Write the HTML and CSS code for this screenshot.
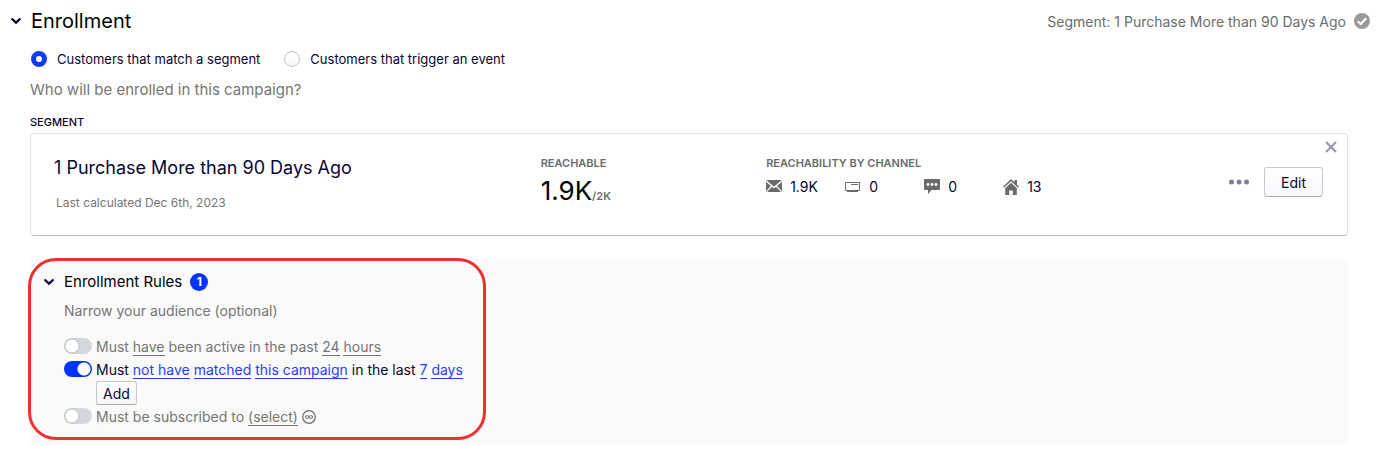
FILE: index.html
```html
<!DOCTYPE html>
<html lang="en">
<head>
    <meta charset="UTF-8">
    <meta name="viewport" content="width=device-width, initial-scale=1.0">
    <title>Campaign Enrollment</title>
    <link rel="stylesheet" href="styles.css">
</head>
<body>
    <header class="section-header">
        <button class="chevron" aria-label="Collapse enrollment">
            <svg width="12" height="8" viewBox="0 0 12 8"><path d="M1.5 1.5 6 5.7 10.5 1.5" fill="none" stroke="currentColor" stroke-width="2.3"/></svg>
        </button>
        <h1>Enrollment</h1>
        <span class="summary">Segment: 1 Purchase More than 90 Days Ago</span>
        <svg class="check" width="16" height="16" viewBox="0 0 16 16">
            <circle cx="8" cy="8" r="8" fill="#999"/>
            <path d="M3.8 8.2 6.8 11 12.2 5.2" fill="none" stroke="#fff" stroke-width="2.2"/>
        </svg>
    </header>

    <main class="content">
        <div class="enroll-type">
            <label><input type="radio" name="enroll" checked>Customers that match a segment</label>
            <label><input type="radio" name="enroll">Customers that trigger an event</label>
        </div>
        <p class="question">Who will be enrolled in this campaign?</p>

        <h2 class="segment-label">SEGMENT</h2>
        <section class="card">
            <div class="segment-name">
                <h3>1 Purchase More than 90 Days Ago</h3>
                <p>Last calculated Dec 6th, 2023</p>
            </div>
            <div class="stat">
                <h4>REACHABLE</h4>
                <p class="total">1.9K<span>/2K</span></p>
            </div>
            <div class="stat">
                <h4>REACHABILITY BY CHANNEL</h4>
                <ul class="channels">
                    <li>
                        <!-- email -->
                        <svg width="16" height="16" viewBox="0 0 16 16">
                            <rect y="1" width="16" height="12" rx="1" fill="#6b6b6b"/>
                            <path d="M0 1.8 8 8.6 16 1.8M.5 12.6 5.8 7M15.5 12.6 10.2 7" fill="none" stroke="#fff" stroke-width="1.3"/>
                        </svg>
                        1.9K
                    </li>
                    <li>
                        <!-- banner -->
                        <svg width="16" height="16" viewBox="0 0 16 16">
                            <path d="M.5 3.5h14v8H.5zM6 5.5h7M2 12.5h11" fill="none" stroke="#6b6b6b"/>
                        </svg>
                        0
                    </li>
                    <li>
                        <!-- sms -->
                        <svg width="16" height="16" viewBox="0 0 16 16">
                            <path d="M1 0h14a1 1 0 0 1 1 1v9a1 1 0 0 1-1 1H7.5L4 15V11H1a1 1 0 0 1-1-1V1a1 1 0 0 1 1-1z" fill="#6b6b6b"/>
                            <g fill="#fff"><circle cx="4" cy="5.5" r="1.4"/><circle cx="8" cy="5.5" r="1.4"/><circle cx="12" cy="5.5" r="1.4"/></g>
                        </svg>
                        0
                    </li>
                    <li>
                        <!-- on site -->
                        <svg width="16" height="16" viewBox="0 0 16 16">
                            <path d="M8 0 11.5 3.3V1H14v4.7L16 7.7 15 8.8 8 2.3 1 8.8 0 7.7z" fill="#6b6b6b"/>
                            <path d="M8 3.8 13.8 9.2V16H9.8V11.5H6.2V16H2.2V9.2z" fill="#6b6b6b"/>
                        </svg>
                        13
                    </li>
                </ul>
            </div>
            <div class="actions">
                <button class="more" aria-label="More options">
                    <svg width="20" height="6" viewBox="0 0 20 6"><g fill="#7f7d97"><circle cx="2.5" cy="3" r="2.5"/><circle cx="10" cy="3" r="2.5"/><circle cx="17.5" cy="3" r="2.5"/></g></svg>
                </button>
                <button class="btn">Edit</button>
            </div>
            <button class="close" aria-label="Remove segment">
                <svg width="12" height="12" viewBox="0 0 12 12"><path d="M1 1 11 11M11 1 1 11" stroke="#9896ac" stroke-width="2"/></svg>
            </button>
        </section>

        <section class="rules-panel">
            <div class="rules">
                <div class="rules-header">
                    <button class="chevron" aria-label="Collapse enrollment rules">
                        <svg width="12" height="8" viewBox="0 0 12 8"><path d="M1.5 1.5 6 5.7 10.5 1.5" fill="none" stroke="currentColor" stroke-width="2.3"/></svg>
                    </button>
                    <h2>Enrollment Rules</h2>
                    <span class="count">1</span>
                </div>
                <p class="hint">Narrow your audience (optional)</p>

                <div class="rule">
                    <input type="checkbox" class="toggle" id="rule-active">
                    <label for="rule-active">Must <a href="#">have</a> been active in the past <a href="#">24</a> <a href="#">hours</a></label>
                </div>
                <div class="rule">
                    <input type="checkbox" class="toggle" id="rule-matched" checked>
                    <label for="rule-matched">Must <a href="#">not have</a> <a href="#">matched</a> <a href="#">this campaign</a> in the last <a href="#">7</a> <a href="#">days</a></label>
                </div>
                <button class="btn add">Add</button>
                <div class="rule">
                    <input type="checkbox" class="toggle" id="rule-subscribed">
                    <label for="rule-subscribed">Must be subscribed to <a href="#">(select)</a></label>
                    <svg width="14" height="14" viewBox="0 0 14 14" fill="none" stroke="#6b6b6b">
                        <circle cx="7" cy="7" r="6.3" stroke-width="1.2"/>
                        <rect x="3.5" y="5.7" width="3.5" height="2.6" rx="1.3"/>
                        <rect x="7" y="5.7" width="3.5" height="2.6" rx="1.3"/>
                    </svg>
                </div>
            </div>
        </section>
    </main>
</body>
</html>
```
FILE: styles.css
```css
* {
    box-sizing: border-box;
}

body {
    font-family: Inter, "Liberation Sans", sans-serif;
    font-size: 14px;
    margin: 0;
    background: #fff;
    color: #0b0533;
}

h1, h2, h3, h4, p, ul {
    margin: 0;
    padding: 0;
    font-weight: 400;
}

button {
    font-family: inherit;
    color: inherit;
    cursor: pointer;
}

svg {
    display: block;
    flex: none;
}

/* Section header */
.section-header {
    display: flex;
    align-items: center;
    height: 42px;
    padding: 0 12px 0 10px;
}

.section-header h1 {
    font-size: 20px;
    color: #000;
    margin: 0 auto 0 9px;
}

.summary {
    color: #6b6b6b;
    margin-right: 8px;
}

.chevron,
.more,
.close {
    display: flex;
    padding: 0;
    border: none;
    background: none;
}

.content {
    padding: 0 34px 0 30px;
}

/* Enrollment type */
.enroll-type {
    display: flex;
    gap: 23px;
    margin-top: 8px;
}

.enroll-type label {
    display: flex;
    align-items: center;
    gap: 10px;
    font-size: 13px;
    line-height: 18px;
}

.enroll-type input {
    appearance: none;
    width: 16px;
    height: 16px;
    margin: 0 0 0 1px;
    border: 1px solid #c4c4c8;
    border-radius: 50%;
    background: linear-gradient(#fff, #f3f5f8);
}

.enroll-type input:checked {
    border: 5px solid #0f3cf5;
    background: #fff;
}

.question {
    font-size: 15px;
    line-height: 20px;
    margin-top: 12px;
    color: #757575;
}

.segment-label {
    font-size: 11px;
    font-weight: 500;
    line-height: 14px;
    margin: 15px 0 4px;
}

/* Segment card */
.card {
    position: relative;
    display: grid;
    grid-template-columns: 41fr 19fr 39fr auto;
    padding: 21px 24px 21px 23px;
    border: 1px solid #e3e3e3;
    border-bottom-color: #bbb;
    border-radius: 4px;
}

.segment-name h3 {
    font-size: 18px;
    line-height: 26px;
}

.segment-name p {
    font-size: 12px;
    line-height: 16px;
    margin: 14px 0 0 2px;
    color: #757575;
}

.stat h4 {
    font-size: 11px;
    font-weight: 600;
    line-height: 16px;
    color: #6b6b6b;
}

.total {
    font-size: 26px;
    line-height: 36px;
    margin-top: 2px;
    color: #000;
}

.total span {
    font-size: 11px;
    font-weight: 600;
    color: #6b6b6b;
}

.channels {
    display: grid;
    grid-template-columns: repeat(4, 79px);
    margin-top: 6px;
    list-style: none;
}

.channels li {
    display: flex;
    align-items: center;
    gap: 8px;
    line-height: 20px;
}

.actions {
    display: flex;
    align-items: center;
    gap: 15px;
    height: 54px;
}

.btn {
    height: 30px;
    padding: 0 16px;
    border: 1px solid #c8c8c8;
    border-bottom-color: #aaa;
    border-radius: 3px;
    background: linear-gradient(#fff, #f5f7fa);
    font-size: 14px;
}

.close {
    position: absolute;
    top: 7px;
    right: 10px;
}

/* Enrollment rules */
.rules-panel {
    display: flow-root;
    margin-top: 23px;
    padding-bottom: 4px;
    background: #fafafa;
}

.rules {
    width: fit-content;
    margin: -1px 0 0 -2px;
    padding: 11px 20px 9px 33px;
    border: 3px solid #f03030;
    border-radius: 28px;
}

.rules-header {
    display: flex;
    align-items: center;
    margin-left: -21px;
    line-height: 20px;
}

.rules-header h2 {
    font-size: 15px;
    color: #000;
    margin: 0 8px 0 9px;
}

.count {
    width: 18px;
    border-radius: 50%;
    background: #0033ff;
    color: #fff;
    font-size: 12px;
    font-weight: 700;
    line-height: 18px;
    text-align: center;
}

.hint {
    line-height: 20px;
    margin: 9px 0 14px;
    color: #757575;
}

.rule {
    display: flex;
    align-items: center;
    gap: 4px;
    height: 23px;
    color: #757575;
}

.rule a {
    border-bottom: 1px solid;
    color: inherit;
    text-decoration: none;
}

.rule:has(:checked) {
    color: #0b0533;
}

.rule:has(:checked) a {
    color: #1f3fff;
}

.toggle {
    appearance: none;
    width: 28px;
    height: 16px;
    margin: 0 0 1px;
    border-radius: 8px;
    background: radial-gradient(circle at 8px 8px, #fff 6px, #b8bcc2 7px, #d3d8de 8px);
}

.toggle:checked {
    background: radial-gradient(circle at 20px 8px, #fff 6px, #0033ff 7px);
}

.btn.add {
    display: block;
    height: 24px;
    margin-left: 32px;
    padding: 0 6px;
}
```
